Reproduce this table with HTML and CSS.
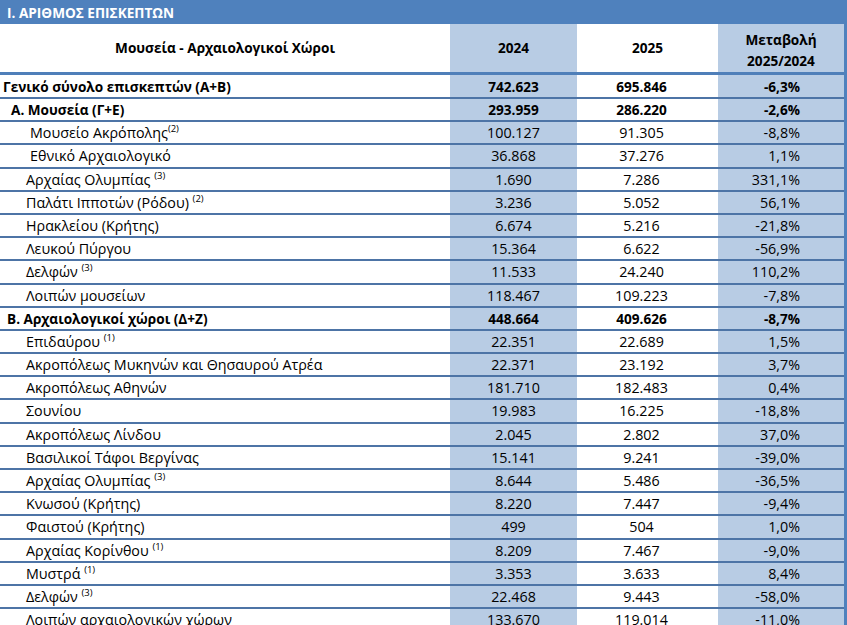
FILE: index.html
```html
<!DOCTYPE html>
<html lang="el">
<head>
<meta charset="utf-8">
<link rel="stylesheet" href="styles.css">
</head>
<body>
<div class="sheet">
  <div class="title">Ι. ΑΡΙΘΜΟΣ ΕΠΙΣΚΕΠΤΩΝ</div>
  <div class="table">
    <div class="row head">
      <div class="cell label">Μουσεία - Αρχαιολογικοί Χώροι</div>
      <div class="cell c24">2024</div>
      <div class="cell c25">2025</div>
      <div class="cell chg"><span>Μεταβολή<br>2025/2024</span></div>
    </div>
    <div class="row bold"><div class="cell label l0">Γενικό σύνολο επισκεπτών (Α+Β)</div><div class="cell c24">742.623</div><div class="cell c25">695.846</div><div class="cell chg">-6,3%</div></div>
    <div class="row bold"><div class="cell label l1">Α. Μουσεία (Γ+Ε)</div><div class="cell c24">293.959</div><div class="cell c25">286.220</div><div class="cell chg">-2,6%</div></div>
    <div class="row"><div class="cell label l2">Μουσείο Ακρόπολης<sup>(2)</sup></div><div class="cell c24">100.127</div><div class="cell c25">91.305</div><div class="cell chg">-8,8%</div></div>
    <div class="row"><div class="cell label l2">Εθνικό Αρχαιολογικό</div><div class="cell c24">36.868</div><div class="cell c25">37.276</div><div class="cell chg">1,1%</div></div>
    <div class="row"><div class="cell label l3">Αρχαίας Ολυμπίας <sup>(3)</sup></div><div class="cell c24">1.690</div><div class="cell c25">7.286</div><div class="cell chg">331,1%</div></div>
    <div class="row"><div class="cell label l3">Παλάτι Ιπποτών (Ρόδου) <sup>(2)</sup></div><div class="cell c24">3.236</div><div class="cell c25">5.052</div><div class="cell chg">56,1%</div></div>
    <div class="row"><div class="cell label l3">Ηρακλείου (Κρήτης)</div><div class="cell c24">6.674</div><div class="cell c25">5.216</div><div class="cell chg">-21,8%</div></div>
    <div class="row"><div class="cell label l3">Λευκού Πύργου</div><div class="cell c24">15.364</div><div class="cell c25">6.622</div><div class="cell chg">-56,9%</div></div>
    <div class="row"><div class="cell label l3">Δελφών <sup>(3)</sup></div><div class="cell c24">11.533</div><div class="cell c25">24.240</div><div class="cell chg">110,2%</div></div>
    <div class="row"><div class="cell label l3">Λοιπών μουσείων</div><div class="cell c24">118.467</div><div class="cell c25">109.223</div><div class="cell chg">-7,8%</div></div>
    <div class="row bold"><div class="cell label lb">Β. Αρχαιολογικοί χώροι (Δ+Ζ)</div><div class="cell c24">448.664</div><div class="cell c25">409.626</div><div class="cell chg">-8,7%</div></div>
    <div class="row"><div class="cell label l3">Επιδαύρου <sup>(1)</sup></div><div class="cell c24">22.351</div><div class="cell c25">22.689</div><div class="cell chg">1,5%</div></div>
    <div class="row"><div class="cell label l3">Ακροπόλεως Μυκηνών και Θησαυρού Ατρέα</div><div class="cell c24">22.371</div><div class="cell c25">23.192</div><div class="cell chg">3,7%</div></div>
    <div class="row"><div class="cell label l3">Ακροπόλεως Αθηνών</div><div class="cell c24">181.710</div><div class="cell c25">182.483</div><div class="cell chg">0,4%</div></div>
    <div class="row"><div class="cell label l3">Σουνίου</div><div class="cell c24">19.983</div><div class="cell c25">16.225</div><div class="cell chg">-18,8%</div></div>
    <div class="row"><div class="cell label l3">Ακροπόλεως Λίνδου</div><div class="cell c24">2.045</div><div class="cell c25">2.802</div><div class="cell chg">37,0%</div></div>
    <div class="row"><div class="cell label l3">Βασιλικοί Τάφοι Βεργίνας</div><div class="cell c24">15.141</div><div class="cell c25">9.241</div><div class="cell chg">-39,0%</div></div>
    <div class="row"><div class="cell label l3">Αρχαίας Ολυμπίας <sup>(3)</sup></div><div class="cell c24">8.644</div><div class="cell c25">5.486</div><div class="cell chg">-36,5%</div></div>
    <div class="row"><div class="cell label l3">Κνωσού (Κρήτης)</div><div class="cell c24">8.220</div><div class="cell c25">7.447</div><div class="cell chg">-9,4%</div></div>
    <div class="row"><div class="cell label l3">Φαιστού (Κρήτης)</div><div class="cell c24">499</div><div class="cell c25">504</div><div class="cell chg">1,0%</div></div>
    <div class="row"><div class="cell label l3">Αρχαίας Κορίνθου <sup>(1)</sup></div><div class="cell c24">8.209</div><div class="cell c25">7.467</div><div class="cell chg">-9,0%</div></div>
    <div class="row"><div class="cell label l3">Μυστρά <sup>(1)</sup></div><div class="cell c24">3.353</div><div class="cell c25">3.633</div><div class="cell chg">8,4%</div></div>
    <div class="row"><div class="cell label l3">Δελφών <sup>(3)</sup></div><div class="cell c24">22.468</div><div class="cell c25">9.443</div><div class="cell chg">-58,0%</div></div>
    <div class="row"><div class="cell label l3">Λοιπών αρχαιολογικών χώρων</div><div class="cell c24">133.670</div><div class="cell c25">119.014</div><div class="cell chg">-11,0%</div></div>
  </div>
</div>
</body>
</html>
```

FILE: styles.css
```css
html, body {
  margin: 0;
  padding: 0;
  background: #ffffff;
}
body {
  font-family: "Open Sans", "DejaVu Sans", sans-serif;
  font-size: 14.3px;
  color: #000000;
  width: 847px;
  height: 625px;
  overflow: hidden;
}
.sheet {
  width: 847px;
}
.title {
  background: #4f81bd;
  color: #ffffff;
  font-weight: 700;
  font-size: 13.6px;
  height: 24px;
  line-height: 26px;
  padding-left: 7px;
}
.table {
  border-right: 3px solid #4f81bd;
}
.row {
  display: grid;
  grid-template-columns: 450px 127px 141px 126px;
  height: 21.2px;
  line-height: 21px;
  border-bottom: 2px solid #4d74a6;
}
.row.head {
  height: 48px;
  line-height: 48px;
  border-bottom: 3px solid #4f7fb9;
  font-weight: 700;
  font-size: 13.6px;
}
.row.head + .row {
  height: 22px;
  line-height: 23px;
}
.cell {
  white-space: nowrap;
  overflow: hidden;
}
.c24, .chg {
  background: #b8cce4;
}
.c24 {
  text-align: center;
}
.c25 {
  text-align: center;
  padding-right: 12px;
}
.chg {
  text-align: right;
  padding-right: 44px;
}
.head .label {
  text-align: center;
}
.head .c25 {
  padding-right: 0;
}
.head .chg {
  display: flex;
  align-items: center;
  justify-content: center;
  text-align: center;
  padding: 3px 0 0 0;
  line-height: 21px;
}
.bold {
  font-weight: 700;
  font-size: 13.6px;
}
.l0 { padding-left: 3px; }
.l1 { padding-left: 11px; }
.lb { padding-left: 7px; }
.l2 { padding-left: 30px; }
.l3 { padding-left: 26px; }
sup {
  font-size: 9.5px;
  line-height: 0;
  vertical-align: 6px;
}
```
